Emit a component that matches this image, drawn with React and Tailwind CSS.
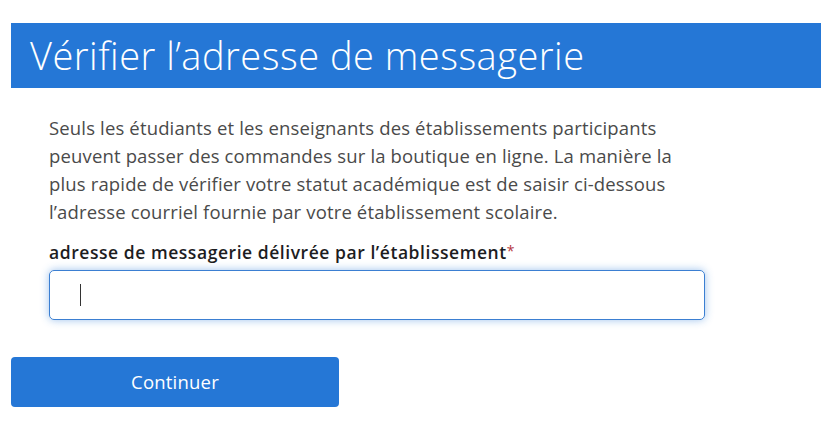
import React, { useState } from 'react';

const VerifyEmail = () => {
  const [email, setEmail] = useState('');

  return (
    <div className="min-h-screen bg-white pt-[23px] pl-[11px] font-['Open_Sans','Liberation_Sans',sans-serif]">
      <div className="bg-[#2577d6] h-[65px] flex items-center pl-[19px]">
        <h1 className="text-white text-[38px] font-light tracking-[0.5px] leading-none pb-[2px]">Vérifier l’adresse de messagerie</h1>
      </div>

      <div className="pl-[38px] pt-[26px]">
        <p className="max-w-[640px] text-[18.5px] tracking-[0.15px] leading-[28px] text-[#4a4a4a]">
          Seuls les étudiants et les enseignants des établissements participants peuvent passer des commandes sur la boutique en ligne. La manière la plus rapide de vérifier votre statut académique est de saisir ci-dessous l’adresse courriel fournie par votre établissement scolaire.
        </p>

        <label className="block h-[24px] mt-[14px] text-[17.5px] tracking-[0.55px] leading-[24px] font-semibold text-[#1d1d1f]">
          adresse de messagerie délivrée par l’établissement<span className="relative -top-[3px] text-[14px] leading-none font-normal text-[#b5363d]">*</span>
        </label>
        <div className="mt-[6px] w-[656px] h-[50px] rounded-[5px] border border-[#3b7fd2] shadow-[0_0_8px_rgba(37,119,214,0.45)] flex items-center pl-[30px]">
          <span className="w-px h-[22px] bg-[#333]" />
          <input
            type="email"
            value={email}
            onChange={e => setEmail(e.target.value)}
            className="flex-1 h-full outline-none bg-transparent text-[18px]"
          />
        </div>
      </div>

      <button className="mt-[37px] w-[328px] h-[50px] rounded-[4px] bg-[#2577d6] text-white text-[18.5px] tracking-[0.2px] cursor-pointer">
        Continuer
      </button>
    </div>
  );
};

export default VerifyEmail;
